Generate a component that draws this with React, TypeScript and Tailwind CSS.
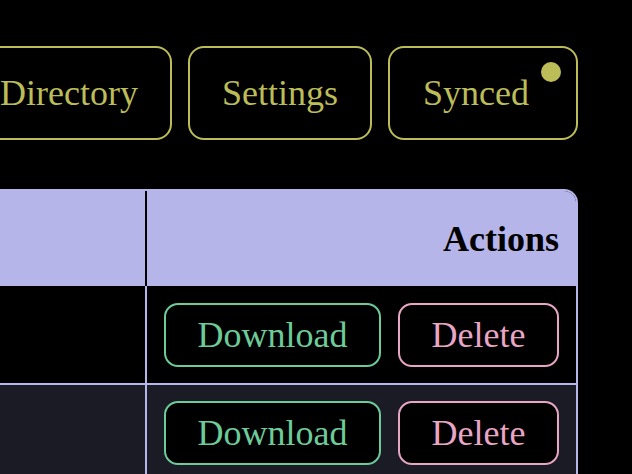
import React from 'react';

const SERIF = { fontFamily: '"Liberation Serif", "Times New Roman", serif' };

function TopButton({ label, width, dot }: { label: string; width: string; dot?: boolean }) {
  return (
    <button
      className={`relative shrink-0 h-[94px] rounded-[16px] border-2 border-[#bcbc58] bg-black text-[36px] leading-[41px] text-[#bcbc58] ${width} ${
        dot ? 'pl-[33px] text-left' : 'text-center'
      }`}
    >
      {label}
      {dot && (
        <span className="absolute right-[15px] top-[14px] h-[20px] w-[20px] rounded-full bg-[#bcbc58]" />
      )}
    </button>
  );
}

function RowActions() {
  return (
    <div className="flex gap-[17px] pl-[17px] pr-[17px]">
      <button className="h-[64px] w-[217px] rounded-[14px] border-2 border-[#6ccb98] bg-black text-[36px] leading-[41px] text-[#6ccb98]">
        Download
      </button>
      <button className="h-[64px] w-[161px] rounded-[14px] border-2 border-[#e8a5c4] bg-black text-[36px] leading-[41px] text-[#e8a5c4]">
        Delete
      </button>
    </div>
  );
}

export default function App() {
  return (
    <div className="h-[474px] w-[632px] overflow-hidden bg-black" style={SERIF}>
      {/* Toolbar */}
      <div className="flex justify-end gap-[16px] pr-[54px] pt-[46px]">
        <TopButton label="Directory" width="w-[206px]" />
        <TopButton label="Settings" width="w-[184px]" />
        <TopButton label="Synced" width="w-[190px]" dot />
      </div>

      {/* Table */}
      <div className="mt-[49px] flex justify-end pr-[54px]">
        <div className="w-[700px] shrink-0 overflow-hidden rounded-t-[14px] border-2 border-b-0 border-[#b5b5ea]">
          <div className="flex h-[95px] bg-[#b5b5ea]">
            <div className="flex-1 border-r-2 border-black" />
            <div className="flex w-[429px] items-center justify-end pr-[17px] text-[36px] font-bold text-black">
              Actions
            </div>
          </div>
          <div className="flex border-b-2 border-[#b5b5ea] bg-black">
            <div className="flex-1" />
            <div className="w-[431px] border-l-2 border-[#b5b5ea] pb-[16px] pt-[17px]">
              <RowActions />
            </div>
          </div>
          <div className="flex bg-[#1b1b26]">
            <div className="flex-1" />
            <div className="w-[431px] border-l-2 border-[#b5b5ea] pb-[16px] pt-[16px]">
              <RowActions />
            </div>
          </div>
        </div>
      </div>
    </div>
  );
}
